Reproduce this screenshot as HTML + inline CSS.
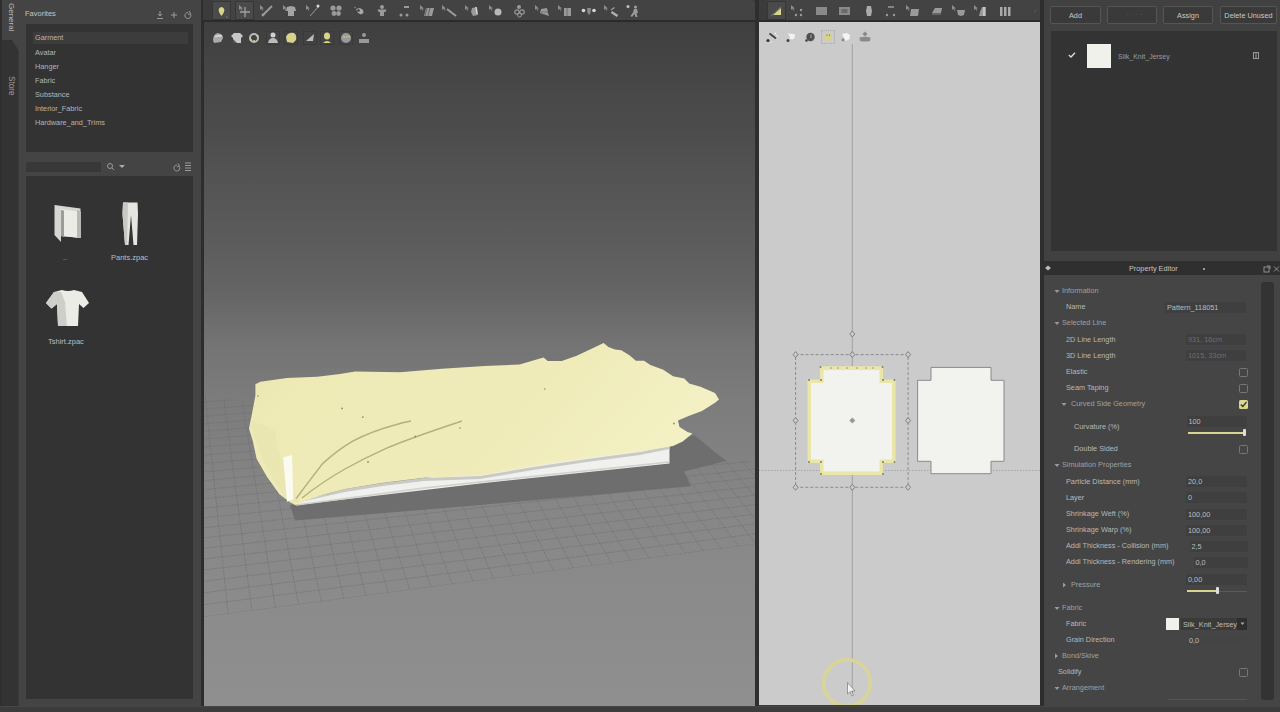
<!DOCTYPE html>
<html><head><meta charset="utf-8">
<style>
*{margin:0;padding:0;box-sizing:border-box}
html,body{width:1280px;height:712px;overflow:hidden;background:#3a3a3a;font-family:"Liberation Sans",sans-serif;color:#c8c8c8;font-size:7.3px;position:relative}
.a{position:absolute}
.t{position:absolute;white-space:nowrap;line-height:10px}
svg{overflow:visible}
</style></head><body>
<!-- left strip -->
<div class="a" style="left:0;top:0;width:18px;height:712px;background:#333"></div>
<div class="a" style="left:0;top:0;width:2px;height:712px;background:#2f2f2f"></div>
<svg class="a" style="left:0;top:0" width="27" height="60"><path d="M2 0H27V60H19V51L12 40H2Z" fill="#444"/></svg>
<div class="t" style="left:6px;top:3px;transform-origin:0 0;transform:translate(10px,0) rotate(90deg);font-size:8px;color:#b8b8b8">General</div>
<div class="t" style="left:6px;top:75.5px;transform-origin:0 0;transform:translate(10px,0) rotate(90deg);font-size:8.2px;color:#9a9a9a">Store</div>
<!-- left panel frame -->
<div class="a" style="left:19px;top:0;width:184px;height:706px;background:#444"></div>
<div class="t" style="left:25px;top:9px;font-size:7.5px;color:#c4c4c4">Favorites</div>
<svg class="a" style="left:154px;top:9px" width="40" height="12" fill="none" stroke="#9a9a9a" stroke-width="1">
 <path d="M3 9.5h6M6 2v5M4 5l2 2 2-2"/><path d="M17 6h6M20 3v6"/><path d="M34 3.5a3 3 0 1 0 2.5 1.5M35 2l1.5 2.5-2.5 1"/>
</svg>
<div class="a" style="left:26px;top:24px;width:167px;height:128px;background:#333"></div>
<div class="a" style="left:33px;top:32px;width:155px;height:12px;background:#3c3c3c"></div>
<div class="t" style="left:35px;top:33px;font-size:7.3px;color:#b5b5b5">Garment</div>
<div class="t" style="left:35px;top:47.5px;font-size:7.3px;color:#b5b5b5">Avatar</div>
<div class="t" style="left:35px;top:61.7px;font-size:7.3px;color:#b5b5b5">Hanger</div>
<div class="t" style="left:35px;top:75.8px;font-size:7.3px;color:#b5b5b5">Fabric</div>
<div class="t" style="left:35px;top:90px;font-size:7.3px;color:#b5b5b5">Substance</div>
<div class="t" style="left:35px;top:104px;font-size:7.3px;color:#b5b5b5">Interior_Fabric</div>
<div class="t" style="left:35px;top:118.3px;font-size:7.3px;color:#b5b5b5">Hardware_and_Trims</div>
<!-- search row -->
<div class="a" style="left:26px;top:162px;width:75px;height:10px;background:#383838"></div>
<svg class="a" style="left:104px;top:160px" width="90" height="14" fill="none" stroke="#9a9a9a" stroke-width="1">
 <circle cx="6" cy="6" r="2.5"/><path d="M8 8l2 2"/><path d="M15 5h6l-3 3z" fill="#aaa" stroke="none"/>
 <path d="M73 5a3 3 0 1 0 2.5 1.5M74 3.5l1.5 2.5-2.5 1"/><path d="M81 3h6M81 5.5h6M81 8h6M81 10.5h6"/>
</svg>
<div class="a" style="left:26px;top:176px;width:167px;height:523px;background:#333"></div>
<!-- folder icon -->
<svg class="a" style="left:50px;top:200px" width="36" height="46">
 <path d="M4.5 5 L30.5 8.5 L30.5 38 L22 37 L11 36 L11 42 L4.5 35 Z" fill="#d6d6d2"/>
 <path d="M11 9 L30.5 12 L30.5 38 L11 36 Z" fill="#ecece6"/>
 <path d="M11 10 L14 10.5 L14 37 L11 36Z" fill="#9c9c98"/>
 <path d="M27 10 L30.5 11 L30.5 38 L27 37.5Z" fill="#b8b8b4"/>
</svg>
<div class="t" style="left:63px;top:253px;font-size:7.3px;color:#aaa">..</div>
<!-- pants -->
<svg class="a" style="left:120px;top:200px" width="22" height="48">
 <path d="M3 2.5 H17.5 L18 14 L17 45 H13.5 L11 15 L8.5 45 H5 L2.5 14 Z" fill="#e6e6e0"/>
 <path d="M3 2.5 H8 L7 45 H5 L2.5 14Z" fill="#c8c8c4"/>
</svg>
<div class="t" style="left:111px;top:253px;font-size:7.5px;color:#bdbdbd">Pants.zpac</div>
<!-- tshirt -->
<svg class="a" style="left:44px;top:287px" width="48" height="42">
 <path d="M18 3 Q24 5 30 3 L38 5 L45 16 L39.5 21 L35 17 L34 39 H14 L13 17 L7.5 21.5 L2 16 L10 5 Z" fill="#ecece6"/>
 <path d="M13 17 L14 39 H23 L21 15 L17 5 L10 5 L2 16 L7.5 21.5Z" fill="#cfcfca"/>
</svg>
<div class="t" style="left:48px;top:337px;font-size:7.5px;color:#bdbdbd">Tshirt.zpac</div>
<!-- 3D toolbar -->
<div class="a" style="left:201px;top:0;width:2px;height:706px;background:#2e2e2e"></div>
<div class="a" style="left:203px;top:0;width:9px;height:20px;background:#3b3b3b"></div>
<div class="a" style="left:212px;top:0;width:543px;height:20px;background:#434343;border-top-right-radius:4px"></div>
<div class="a" style="left:203px;top:20px;width:553px;height:2px;background:#2b2b2b"></div>
<div class="a" style="left:203px;top:22px;width:1px;height:684px;background:#2b2b2b"></div>
<!-- 3D viewport -->
<div class="a" style="left:204px;top:22px;width:551px;height:684px;background:linear-gradient(#3f3f3f 0.0%,#494949 11.4%,#4b4b4b 15.1%,#535353 22.4%,#5b5b5b 31.1%,#646464 39.2%,#6d6d6d 43.6%,#747474 47.2%,#7c7c7c 55.3%,#868686 69.9%,#8c8c8c 87.4%,#8f8f8f 100.0%)"></div>
<!-- separator -->
<div class="a" style="left:755px;top:0;width:4px;height:712px;background:#2e2e2e"></div>
<!-- 2D toolbar -->
<div class="a" style="left:759px;top:0;width:281px;height:20px;background:#434343"></div>
<div class="a" style="left:759px;top:0;width:8px;height:20px;background:#3b3b3b"></div>
<div class="a" style="left:759px;top:20px;width:281px;height:2px;background:#2b2b2b"></div>
<div class="a" style="left:759px;top:22px;width:281px;height:683px;background:#cbcbcb"></div>
<div class="a" style="left:1040px;top:0;width:4px;height:712px;background:#2e2e2e"></div>
<!-- bottom bar -->
<div class="a" style="left:0;top:706px;width:1280px;height:6px;background:#3c3c3c"></div>
<div class="a" style="left:0;top:706px;width:1280px;height:1px;background:#464646"></div>
<div class="a" style="left:212px;top:1px;width:19px;height:19px;background:#4a4a4a;border:1px solid #363636"></div>
<svg class="a" style="left:212px;top:1px;filter:blur(.35px)" width="19" height="19" ><path d="M9.5 6 Q12.5 6.5 12.3 9.5 Q12 12.5 9.5 15 Q7 12.5 6.7 9.5 Q6.5 6.5 9.5 6Z" fill="#d8d58a"/><path d="M14 15l2 2" stroke="#777" stroke-width=".8"/></svg>
<div class="a" style="left:235px;top:1px;width:19px;height:19px;background:#4a4a4a;border:1px solid #363636"></div>
<svg class="a" style="left:235px;top:1px;filter:blur(.35px)" width="19" height="19" ><path d="M4 4l0 5 1.3-1.2 1.2 2 .8-.4-1.1-2h1.8z" fill="#8e8e8e"/><path d="M10 6v10M5 11h10" stroke="#a0a0a0" stroke-width="1.3"/></svg>
<svg class="a" style="left:267px;top:11px;filter:blur(.35px)" width="1" height="1" ><path d="M-7 -6l0 5 1.3-1.2 1.2 2 .8-.4-1.1-2h1.8z" fill="#8e8e8e"/><path d="M-4 4 L5 -5" stroke="#9a9a9a" stroke-width="2"/><circle cx="-4" cy="4" r="1.4" fill="#9a9a9a"/></svg>
<svg class="a" style="left:290px;top:11px;filter:blur(.35px)" width="1" height="1" ><path d="M-7 -6l0 5 1.3-1.2 1.2 2 .8-.4-1.1-2h1.8z" fill="#8e8e8e"/><path d="M-3 -4 L1 -5 L5 -4 L6 0 L4 0 L4 5 L-2 5 L-2 0 L-4 0Z" fill="#a4a4a4"/></svg>
<svg class="a" style="left:313px;top:11px;filter:blur(.35px)" width="1" height="1" ><path d="M-7 -6l0 5 1.3-1.2 1.2 2 .8-.4-1.1-2h1.8z" fill="#8e8e8e"/><path d="M-3 5 L5 -4" stroke="#9a9a9a" stroke-width="1"/><circle cx="5" cy="-5" r="1.5" fill="#ddd"/></svg>
<svg class="a" style="left:336px;top:11px;filter:blur(.35px)" width="1" height="1" ><circle cx="-3" cy="-3" r="2.6" fill="#9a9a9a"/><circle cx="3" cy="-3" r="2.6" fill="#9a9a9a"/><circle cx="-2" cy="2.5" r="2.4" fill="#9a9a9a"/><circle cx="2.5" cy="2.5" r="2.4" fill="#9a9a9a"/></svg>
<svg class="a" style="left:359px;top:11px;filter:blur(.35px)" width="1" height="1" ><path d="M-3 -2 L1 -3 L4 -1 L4.5 2 L2 3.5 L-1 2Z" fill="#a8a8a8"/><circle cx="-0.5" cy="-0.5" r="1.3" fill="#3a3a3a"/><circle cx="-4" cy="-3.5" r=".8" fill="#888"/></svg>
<svg class="a" style="left:382px;top:11px;filter:blur(.35px)" width="1" height="1" ><circle cx="0" cy="-4" r="2" fill="#9a9a9a"/><path d="M-4.5 -1.5 L4.5 -1.5 L3.5 1 L2 1 L2 5 L-2 5 L-2 1 L-3.5 1Z" fill="#9a9a9a"/></svg>
<svg class="a" style="left:405px;top:11px;filter:blur(.35px)" width="1" height="1" ><circle cx="-4" cy="4" r="1.5" fill="#9a9a9a"/><circle cx="2" cy="4" r="1.5" fill="#9a9a9a"/><path d="M-1 -4h5" stroke="#9a9a9a" stroke-width="2"/></svg>
<svg class="a" style="left:428px;top:11px;filter:blur(.35px)" width="1" height="1" ><path d="M-8 -6l0 5 1.3-1.2 1.2 2 .8-.4-1.1-2h1.8z" fill="#8e8e8e"/><path d="M-4 5 L-2 -3 L6 -3 L4 5Z" fill="#9a9a9a"/><path d="M-1 -3 L-3 5M2 -3 L0 5" stroke="#555" stroke-width=".8"/></svg>
<svg class="a" style="left:450px;top:11px;filter:blur(.35px)" width="1" height="1" ><path d="M-8 -6l0 5 1.3-1.2 1.2 2 .8-.4-1.1-2h1.8z" fill="#8e8e8e"/><path d="M-3 -2 L6 5" stroke="#9a9a9a" stroke-width="2.2"/></svg>
<svg class="a" style="left:473px;top:11px;filter:blur(.35px)" width="1" height="1" ><path d="M-8 -6l0 5 1.3-1.2 1.2 2 .8-.4-1.1-2h1.8z" fill="#8e8e8e"/><path d="M-1 -3 L4 -4 L5 4 L0 5 L-2 1Z" fill="#9a9a9a"/><path d="M3 -4 L4 3" stroke="#ddd" stroke-width="1.2"/></svg>
<svg class="a" style="left:497px;top:11px;filter:blur(.35px)" width="1" height="1" ><path d="M-8 -6l0 5 1.3-1.2 1.2 2 .8-.4-1.1-2h1.8z" fill="#8e8e8e"/><circle cx="1" cy="1" r="3.5" fill="#b8b8b8"/></svg>
<svg class="a" style="left:520px;top:11px;filter:blur(.35px)" width="1" height="1" ><circle cx="-1" cy="-4" r="2" fill="#9a9a9a"/><circle cx="-3" cy="1" r="2.2" fill="none" stroke="#9a9a9a" stroke-width="1.2"/><circle cx="2" cy="1" r="2.2" fill="none" stroke="#9a9a9a" stroke-width="1.2"/><circle cx="-0.5" cy="4" r="2" fill="none" stroke="#9a9a9a" stroke-width="1"/></svg>
<svg class="a" style="left:543px;top:11px;filter:blur(.35px)" width="1" height="1" ><path d="M-8 -6l0 5 1.3-1.2 1.2 2 .8-.4-1.1-2h1.8z" fill="#8e8e8e"/><path d="M-2 -2 L4 -3 L5 2 L6 5 L0 3 L-3 2Z" fill="#9a9a9a"/><path d="M-2 1h7" stroke="#666" stroke-width=".7"/></svg>
<svg class="a" style="left:566px;top:11px;filter:blur(.35px)" width="1" height="1" ><path d="M-8 -6l0 5 1.3-1.2 1.2 2 .8-.4-1.1-2h1.8z" fill="#8e8e8e"/><path d="M-2 -3 L5 -3 L5 5 L-2 5Z" fill="#9a9a9a"/><path d="M1 -3 V5" stroke="#666" stroke-width=".8"/></svg>
<svg class="a" style="left:589px;top:11px;filter:blur(.35px)" width="1" height="1" ><circle cx="-5.5" cy="-0.5" r="1.8" fill="#d8d8d8"/><circle cx="5" cy="-0.5" r="1.8" fill="#d8d8d8"/><path d="M-2 -3 L2 -3 L1.5 2 L0 4 L-1.5 2Z" fill="#8a8a8a"/></svg>
<svg class="a" style="left:612px;top:11px;filter:blur(.35px)" width="1" height="1" ><path d="M-8 -6l0 5 1.3-1.2 1.2 2 .8-.4-1.1-2h1.8z" fill="#8e8e8e"/><path d="M-1 -1 L2.5 -3.5" stroke="#9a9a9a" stroke-width="1.5"/><path d="M-0.5 1 L5.5 5" stroke="#b0b0b0" stroke-width="2.4"/></svg>
<svg class="a" style="left:634px;top:11px;filter:blur(.35px)" width="1" height="1" ><circle cx="-6" cy="-4.5" r="1.5" fill="#c0c0c0"/><circle cx="1.5" cy="-4" r="1.6" fill="#9a9a9a"/><path d="M0 -2 L3 -2 L4 2 L2.5 2 L3.5 6 L1.5 6 L0.5 3 L-2 6 L-3.5 5 L-1 1.5Z" fill="#9a9a9a"/></svg>
<div class="a" style="left:266px;top:31px;width:14px;height:14px;border:1px solid #3a3a3a;background:#424242"></div>
<div class="a" style="left:284px;top:31px;width:14px;height:14px;border:1px solid #3a3a3a;background:#424242"></div>
<div class="a" style="left:303px;top:31px;width:14px;height:14px;border:1px solid #3a3a3a;background:#424242"></div>
<div class="a" style="left:320px;top:31px;width:14px;height:14px;border:1px solid #3a3a3a;background:#424242"></div>
<div class="a" style="left:339px;top:31px;width:14px;height:14px;border:1px solid #3a3a3a;background:#424242"></div>
<svg class="a" style="left:218px;top:38px;filter:blur(.35px)" width="1" height="1" ><path d="M-5 2 Q-5 -4 0 -5 Q5 -4 5 0 L3 4 L-4 5Z" fill="#aaa"/><path d="M-3 -1 Q0 -3 4 -2" stroke="#ddd" stroke-width="1.5" fill="none"/></svg>
<svg class="a" style="left:237px;top:38px;filter:blur(.35px)" width="1" height="1" ><path d="M-3 -5 L3 -5 L6 -2 L4 0 L4 5 L-4 5 L-4 0 L-6 -2Z" fill="#c8c8c8"/><path d="M-4 1 L0 5 L-4 5Z" fill="#555"/></svg>
<svg class="a" style="left:254px;top:38px;filter:blur(.35px)" width="1" height="1" ><circle cx="0" cy="0" r="4" fill="none" stroke="#bbb" stroke-width="2"/><circle cx="-3" cy="2" r="1.1" fill="#d8d58a"/><circle cx="3.5" cy="-2" r="1.1" fill="#d8d58a"/><path d="M-1 2 L1 2 L0 4Z" fill="#d8d58a"/></svg>
<svg class="a" style="left:273px;top:38px;filter:blur(.35px)" width="1" height="1" ><circle cx="0" cy="-3" r="2.5" fill="#d0d0d0"/><path d="M-5 5 Q-4 0 0 0 Q4 0 5 5Z" fill="#bbb"/></svg>
<svg class="a" style="left:291px;top:38px;filter:blur(.35px)" width="1" height="1" ><path d="M-5 -1 Q-3 -6 3 -5 Q6 -3 5 2 L2 5 L-4 4Z" fill="#d8d58a"/></svg>
<svg class="a" style="left:310px;top:38px;filter:blur(.35px)" width="1" height="1" ><path d="M-4 3 L4 -4 L3 3Z" fill="#bbb"/></svg>
<svg class="a" style="left:327px;top:38px;filter:blur(.35px)" width="1" height="1" ><ellipse cx="0" cy="-2" rx="3" ry="3.5" fill="#d8d58a"/><path d="M-4 5 Q0 1 4 5" fill="#d8d58a"/></svg>
<svg class="a" style="left:346px;top:38px;filter:blur(.35px)" width="1" height="1" ><circle cx="0" cy="0" r="5" fill="#999"/><circle cx="-2" cy="-1" r=".8" fill="#d8d58a"/><circle cx="0.5" cy="-1" r=".8" fill="#d8d58a"/><circle cx="3" cy="-1.5" r=".8" fill="#d8d58a"/></svg>
<svg class="a" style="left:364px;top:38px;filter:blur(.35px)" width="1" height="1" ><circle cx="0" cy="-3" r="2" fill="#999"/><path d="M-5 1h10v4h-10z" fill="#999"/></svg>
<div class="a" style="left:767px;top:1px;width:19px;height:19px;background:#4a4a4a;border:1px solid #363636"></div>
<svg class="a" style="left:767px;top:1px;filter:blur(.35px)" width="19" height="19" ><path d="M6 14 L14 7 L14 14Z" fill="#d8d58a"/><path d="M4 15 L14 6" stroke="#888" stroke-width=".8"/></svg>
<svg class="a" style="left:798px;top:11px;filter:blur(.35px)" width="1" height="1" ><path d="M-7 -6l0 5 1.3-1.2 1.2 2 .8-.4-1.1-2h1.8z" fill="#8e8e8e"/><circle cx="-2" cy="4" r="1.2" fill="#9a9a9a"/><circle cx="3" cy="4" r="1.2" fill="#9a9a9a"/><circle cx="3" cy="-1" r="1.2" fill="#9a9a9a"/></svg>
<svg class="a" style="left:822px;top:11px;filter:blur(.35px)" width="1" height="1" ><rect x="-6" y="-4" width="11" height="8" fill="#8a8a8a"/></svg>
<svg class="a" style="left:845px;top:11px;filter:blur(.35px)" width="1" height="1" ><rect x="-6" y="-4" width="11" height="8" fill="#8a8a8a"/><rect x="-3.5" y="-2" width="6" height="4" fill="#6a6a6a"/></svg>
<svg class="a" style="left:869px;top:11px;filter:blur(.35px)" width="1" height="1" ><path d="M-2 -5 L2 -5 L3 0 L2 5 L-2 5 L-3 0Z" fill="#aaa"/></svg>
<svg class="a" style="left:891px;top:11px;filter:blur(.35px)" width="1" height="1" ><path d="M-3 -4h6" stroke="#9a9a9a" stroke-width="1.5"/><circle cx="-4" cy="4" r="1.2" fill="#9a9a9a"/><circle cx="3" cy="4" r="1.2" fill="#9a9a9a"/></svg>
<svg class="a" style="left:914px;top:11px;filter:blur(.35px)" width="1" height="1" ><path d="M-8 -6l0 5 1.3-1.2 1.2 2 .8-.4-1.1-2h1.8z" fill="#8e8e8e"/><path d="M-3 -2 L5 -2 L4 5 L-4 5Z" fill="#9a9a9a"/></svg>
<svg class="a" style="left:937px;top:11px;filter:blur(.35px)" width="1" height="1" ><path d="M-5 2 L-2 -3 L5 -3 L4 2Z" fill="#9a9a9a"/><path d="M-5 3h9" stroke="#888"/></svg>
<svg class="a" style="left:960px;top:11px;filter:blur(.35px)" width="1" height="1" ><path d="M-8 -6l0 5 1.3-1.2 1.2 2 .8-.4-1.1-2h1.8z" fill="#8e8e8e"/><path d="M-3 -1 L5 -1 L4 4 L1 5 L-2 4Z" fill="#9a9a9a"/></svg>
<svg class="a" style="left:982px;top:11px;filter:blur(.35px)" width="1" height="1" ><path d="M-8 -6l0 5 1.3-1.2 1.2 2 .8-.4-1.1-2h1.8z" fill="#8e8e8e"/><path d="M0 -4 L4 -4 L4 5 L-3 5 L-2 1Z" fill="#9a9a9a"/><path d="M2 -4 V5" stroke="#eee"/></svg>
<svg class="a" style="left:1005px;top:11px;filter:blur(.35px)" width="1" height="1" ><rect x="-5" y="-4" width="2.5" height="9" fill="#aaa"/><rect x="-1" y="-4" width="2.5" height="9" fill="#aaa"/><rect x="3" y="-4" width="2.5" height="9" fill="#aaa"/></svg>
<svg class="a" style="left:1035px;top:11px;filter:blur(.35px)" width="1" height="1" ><path d="M-1 2 L2 -2" stroke="#555" stroke-width="1"/></svg>
<svg class="a" style="left:772px;top:37px;filter:blur(.35px)" width="1" height="1" ><path d="M-2.5 -3.5 L4 1.5" stroke="#444" stroke-width="2"/><circle cx="-4" cy="3.5" r="1.6" fill="#333"/><circle cx="3.5" cy="-3.5" r=".7" fill="#fff"/><circle cx="5" cy="-1" r=".7" fill="#fff"/><circle cx="-1" cy="5" r=".6" fill="#fff"/></svg>
<svg class="a" style="left:791px;top:37px;filter:blur(.35px)" width="1" height="1" ><path d="M-3 -3.5 L3.5 -3 L4 0 L2 2.5 L-1 2 L-1.5 -1Z" fill="#f2f2f2"/><circle cx="-3" cy="3.5" r="1.5" fill="#444"/></svg>
<svg class="a" style="left:810px;top:37px;filter:blur(.35px)" width="1" height="1" ><circle cx="0.5" cy="0" r="4.2" fill="#505050"/><path d="M1 -2.5v3.5" stroke="#aaa" stroke-width="1"/><circle cx="-3.5" cy="3.5" r="1.3" fill="#444"/></svg>
<svg class="a" style="left:828px;top:37px;filter:blur(.35px)" width="1" height="1" ><rect x="-6.5" y="-6.5" width="13" height="13" fill="none" stroke="#999" stroke-width=".8" stroke-dasharray="1 1.2"/><path d="M-4 -1 Q-3 -4.5 1 -4.5 Q4.5 -3.5 4 0.5 Q3.5 4 -0.5 4 Q-4 3 -4 -1Z" fill="#d6d38c"/><circle cx="-1" cy="-2" r=".6" fill="#444"/><circle cx="1.5" cy="-2" r=".6" fill="#444"/></svg>
<svg class="a" style="left:846px;top:37px;filter:blur(.35px)" width="1" height="1" ><path d="M-4 -3 L1 -4 L4 -2 L3.5 2 L0 4 L-2 1Z" fill="#f4f4f4"/><circle cx="-3" cy="3" r="1.4" fill="#888"/></svg>
<svg class="a" style="left:865px;top:37px;filter:blur(.35px)" width="1" height="1" ><path d="M0 -5.5 L2.5 -3 L0 -0.5 L-2.5 -3Z" fill="#8a8a8a"/><path d="M-5.5 0.5 Q0 -1 5.5 0.5 L5 4 Q0 5 -5 4Z" fill="#8a8a8a"/></svg><svg class="a" style="left:0;top:0" width="1280" height="712">
<defs><clipPath id="vp"><rect x="204" y="22" width="551" height="684"/></clipPath>
<linearGradient id="cl" x1="0" y1="0" x2="1" y2="0.3"><stop offset="0" stop-color="#e8e4ac"/><stop offset="0.15" stop-color="#eeeab6"/><stop offset="0.7" stop-color="#f0ecba"/><stop offset="1" stop-color="#f3f0c4"/></linearGradient></defs>
<g clip-path="url(#vp)">
<clipPath id="gc"><polygon points="204,396 756,462 756,544 204,617"/></clipPath><path clip-path="url(#gc)" d="M129.6 626.8L839.6 532.9M129.7 614.3L831.6 524.0M129.8 602.1L823.8 515.2M129.8 590.3L816.1 506.6M129.9 578.7L808.6 498.2M130.0 567.5L801.3 489.9M130.1 556.6L794.2 481.9M130.2 545.9L787.1 474.0M130.3 535.6L780.3 466.3M130.3 525.5L773.6 458.7M130.4 515.6L767.0 451.3M130.5 506.0L760.6 444.1M130.6 496.7L754.2 437.0M130.6 487.5L748.1 430.0M130.7 478.6L742.0 423.2M130.8 469.9L736.1 416.5M130.8 461.4L730.2 410.0M130.9 453.1L724.5 403.6M130.9 445.0L718.9 397.3M131.0 437.0L713.4 391.1M131.1 429.3L708.0 385.0M131.1 421.7L702.7 379.0M131.2 414.3L697.5 373.2M131.2 407.0L692.4 367.5M131.3 399.9L687.4 361.8M131.3 393.0L682.5 356.3M129.6 626.8L131.4 386.1M154.7 623.5L149.7 385.0M179.5 620.2L167.9 383.8M204.0 617.0L185.9 382.6M228.1 613.8L203.6 381.5M251.9 610.6L221.3 380.3M275.4 607.5L238.7 379.2M298.5 604.5L255.9 378.1M321.4 601.5L273.0 377.0M343.9 598.5L289.9 375.9M366.1 595.5L306.7 374.8M388.1 592.6L323.3 373.7M409.7 589.8L339.7 372.7M431.1 587.0L355.9 371.6M452.2 584.2L372.1 370.6M473.0 581.4L388.0 369.6M493.6 578.7L403.8 368.5M513.8 576.0L419.4 367.5M533.9 573.4L434.9 366.5M553.7 570.8L450.3 365.5M573.2 568.2L465.5 364.6M592.5 565.6L480.6 363.6M611.6 563.1L495.5 362.6M630.4 560.6L510.3 361.7M649.0 558.1L524.9 360.7M667.4 555.7L539.5 359.8M685.5 553.3L553.8 358.8M703.5 550.9L568.1 357.9M721.2 548.6L582.2 357.0M738.7 546.3L596.2 356.1M756.0 544.0L610.1 355.2M773.1 541.7L623.8 354.3M790.0 539.5L637.5 353.4M806.7 537.3L651.0 352.6M823.2 535.1L664.3 351.7M839.6 532.9L677.6 350.8" stroke="#6c6c6c" stroke-width="1" fill="none" opacity="0.6" stroke-dasharray="1.5 1"/>
<polygon points="669.5,443.0 694.0,435.0 726.0,461.0 684.0,471.5 691.0,486.2 587.0,495.5 480.0,505.0 295.0,520.6 290.0,505.0" fill="#6e6e6e"/>
<polygon points="292.0,500.0 669.5,438.0 691.0,434.0 669.5,446.0 669.5,463.5 480.0,483.5 297.0,505.0" fill="#f0f0ee"/>
<path d="M296 505 L424 488 L669 462" stroke="#d0d0cc" stroke-width="1.5" fill="none"/>
<path d="M296 503 L345 492 L383 486 L424 481 L480 479 L533 470 L587 462 L640 455 L669.5 449 L669.5 446 L640 452 L587 459 L533 467 L480 476 L424 478 L383 483 L345 489 L296 502Z" fill="#c9c9c6"/>
<polygon points="255.4,384.2 260.4,381.7 287.0,377.9 317.3,376.7 340.0,374.1 355.2,371.6 400.0,372.3 442.2,368.8 484.4,366.0 519.5,364.6 543.5,357.6 547.7,361.1 561.7,361.1 576.1,356.0 590.0,349.5 603.6,343.1 608.4,347.1 614.9,349.5 621.3,350.3 629.4,355.2 635.9,360.8 644.0,360.8 650.4,364.9 663.3,369.7 673.0,376.2 684.3,378.6 689.2,383.4 700.5,386.7 715.0,393.1 719.0,399.6 715.0,402.8 702.0,410.9 689.2,415.7 677.9,420.6 679.5,427.0 687.5,431.9 692.4,433.5 682.7,441.6 673.0,446.0 640.2,451.5 586.8,458.1 533.4,466.1 480.0,475.5 424.0,477.8 383.0,482.8 345.0,489.0 319.8,495.5 295.8,504.3 295.8,505.6 289.5,501.8 279.4,494.2 266.8,476.5 256.6,458.8 252.8,441.1 249.0,428.5 251.6,415.8 255.4,395.6" fill="url(#cl)"/>
<path d="M295.8 499 Q310 480 322.4 463.9 Q336 451 352.7 441.1 Q372 431 395.7 424.7 Q404 422 411 421" stroke="#b3b07e" stroke-width="1.5" fill="none"/>
<path d="M302 498 Q322 482 345 469 Q365 458 385.6 448.7 Q405 440 462 421" stroke="#b3b07e" stroke-width="1.4" fill="none"/>
<path d="M250 420 Q262 470 290 503 L300 503 Q280 470 275 430Z" fill="#e2dfa8" opacity="0.35"/>
<g fill="#8f8d68"><circle cx="342" cy="408.4" r=".9"/><circle cx="362.8" cy="417.1" r=".9"/><circle cx="415.3" cy="436.4" r=".9"/><circle cx="368" cy="462" r=".9"/><circle cx="544.7" cy="389" r=".8"/><circle cx="674" cy="423.5" r=".9"/><circle cx="258" cy="396" r=".8"/><circle cx="460" cy="428" r=".8"/></g>
<path d="M283.2 457.5 L292 455 L293.3 499.3 L287 501.8Z" fill="#fbfbf2"/>
</g></svg><svg class="a" style="left:0;top:0" width="1280" height="712">
<defs><clipPath id="v2"><rect x="759" y="22" width="281" height="683"/></clipPath></defs>
<g clip-path="url(#v2)">
<path d="M852.3 44V695" stroke="#a2a2a2" stroke-width="1"/>
<path d="M759 470.5H1040" stroke="#a4a4a4" stroke-width="1" stroke-dasharray="1.5 1.5"/>
<rect x="795.6" y="354.6" width="112.5" height="132.7" fill="none" stroke="#8c8c8c" stroke-width="1" stroke-dasharray="3 2"/>
<path d="M807.5 379.5 H820 V366.3 H883 V379.5 H895.6 V463 H883 V475 H820 V463 H807.5Z" fill="#e9e6a8"/>
<path d="M811 383 H823.5 V370 H879.5 V383 H892 V459.5 H879.5 V471.5 H823.5 V459.5 H811Z" fill="#f2f2ee"/>
<g fill="#7d7d7d"><circle cx="820.5" cy="367" r="1"/><circle cx="882.5" cy="367" r="1"/><circle cx="809" cy="380" r="1"/><circle cx="821" cy="380" r="1"/><circle cx="883" cy="380" r="1"/><circle cx="894.5" cy="380" r="1"/>
<circle cx="809" cy="462" r="1"/><circle cx="821" cy="462" r="1"/><circle cx="883" cy="462" r="1"/><circle cx="894.5" cy="462" r="1"/><circle cx="821" cy="474" r="1"/><circle cx="883" cy="474" r="1"/>
<circle cx="831" cy="368" r=".7"/><circle cx="838" cy="368" r=".7"/><circle cx="847" cy="368" r=".7"/><circle cx="857" cy="368" r=".7"/><circle cx="866" cy="368" r=".7"/><circle cx="873" cy="368" r=".7"/></g>
<path d="M917.6 380.3 H931 V367.4 H991 V380.3 H1004 V461.3 H991 V473.7 H931 V461.3 H917.6Z" fill="#f2f2ee" stroke="#8a8a8a" stroke-width="1"/>
<g fill="#cbcbcb" stroke="#7a7a7a" stroke-width="0.9">
<path d="M795.6 351.6l2.5 3-2.5 3-2.5-3z"/><path d="M852.3 351.6l2.5 3-2.5 3-2.5-3z"/><path d="M908.1 351.6l2.5 3-2.5 3-2.5-3z"/>
<path d="M795.6 417.5l2.5 3-2.5 3-2.5-3z"/><path d="M908.1 417.5l2.5 3-2.5 3-2.5-3z"/>
<path d="M795.6 484.3l2.5 3-2.5 3-2.5-3z"/><path d="M852.3 484.3l2.5 3-2.5 3-2.5-3z"/><path d="M908.1 484.3l2.5 3-2.5 3-2.5-3z"/>
<path d="M852.3 331l2.5 3-2.5 3-2.5-3z"/>
</g>
<path d="M852.3 417.5l3 3-3 3-3-3z" fill="#999"/>
<circle cx="847" cy="683" r="23.3" fill="none" stroke="#d9d596" stroke-width="3.6"/>
<path d="M847.5 682.5 L847.5 694 L850 691.5 L852 696 L853.5 695.3 L851.5 691 L855 691Z" fill="#f4f4f4" stroke="#777" stroke-width=".7"/>
</g></svg><div class="a" style="left:1044px;top:0;width:236px;height:261px;background:#414141"></div>
<div class="a" style="left:1050px;top:6px;width:51px;height:18px;background:#3a3a3a;border:1px solid #555;border-radius:2px"></div>
<div class="t" style="left:1050px;top:11px;width:51px;text-align:center;font-size:7.3px;color:#c8c8c8">Add</div>
<div class="a" style="left:1107px;top:6px;width:50px;height:18px;background:#3a3a3a;border:1px solid #555;border-radius:2px"></div>
<div class="a" style="left:1163px;top:6px;width:50px;height:18px;background:#3a3a3a;border:1px solid #555;border-radius:2px"></div>
<div class="t" style="left:1163px;top:11px;width:50px;text-align:center;font-size:7.3px;color:#c8c8c8">Assign</div>
<div class="a" style="left:1220px;top:6px;width:57px;height:18px;background:#3a3a3a;border:1px solid #555;border-radius:2px"></div>
<div class="t" style="left:1220px;top:11px;width:57px;text-align:center;font-size:7.3px;color:#c8c8c8">Delete Unused</div>
<div class="t" style="left:1126px;top:10px;font-size:7.3px;color:#5c5c5c">· · · ·</div>
<div class="a" style="left:1051px;top:31px;width:226px;height:220px;background:#333"></div>
<svg class="a" style="left:1068px;top:52px" width="8" height="6"><path d="M.8 3 L3 5 L7 .8" stroke="#ddd" stroke-width="1.3" fill="none"/></svg>
<div class="a" style="left:1087px;top:44px;width:24px;height:24px;background:#f1f1ec"></div>
<div class="t" style="left:1118px;top:52px;font-size:7px;color:#9c9c9c">Silk_Knit_Jersey</div>
<svg class="a" style="left:1253px;top:52px" width="7" height="7"><rect x="0.5" y="0.5" width="5" height="6" fill="none" stroke="#999" stroke-width="1"/><path d="M3 .5V6.5" stroke="#999"/></svg>
<div class="a" style="left:1044px;top:261px;width:236px;height:14px;background:#2f2f2f"></div>
<svg class="a" style="left:1044px;top:264px" width="8" height="8"><path d="M1 4 L4 1.5 L7 4 L4 6.5Z" fill="#bbb"/></svg>
<div class="t" style="left:1129px;top:264px;font-size:7.3px;color:#c4c4c4">Property Editor</div>
<div class="a" style="left:1203px;top:268px;width:2px;height:2px;background:#999"></div>
<svg class="a" style="left:1263px;top:265px" width="17" height="8" fill="none" stroke="#999" stroke-width=".9"><rect x="1" y="2" width="5" height="5"/><path d="M4 1h3v3"/><path d="M11 1.5l5 5M16 1.5l-5 5"/></svg>
<div class="a" style="left:1044px;top:275px;width:236px;height:431px;background:#454545"></div>
<div class="a" style="left:1261px;top:282px;width:13px;height:418px;background:#333;border-radius:3px"></div>
<svg class="a" style="left:1054px;top:289px" width="6" height="5"><path d="M.5 1 H5.5 L3 4Z" fill="#9a9a9a"/></svg>
<div class="t" style="left:1062px;top:286px;font-size:7.3px;color:#a0a0a0">Information</div>
<div class="t" style="left:1066px;top:302px;font-size:7.3px;color:#b8b8b8">Name</div>
<div class="a" style="left:1165px;top:301.5px;width:81px;height:11px;background:#3f3f3f"></div>
<div class="t" style="left:1167px;top:302.5px;font-size:7.3px;color:#bdbdbd">Pattern_118051</div>
<svg class="a" style="left:1054px;top:321px" width="6" height="5"><path d="M.5 1 H5.5 L3 4Z" fill="#9a9a9a"/></svg>
<div class="t" style="left:1062px;top:318px;font-size:7.3px;color:#a0a0a0">Selected Line</div>
<div class="t" style="left:1066px;top:334.5px;font-size:7.3px;color:#b8b8b8">2D Line Length</div>
<div class="a" style="left:1186px;top:334.0px;width:60px;height:11px;background:#3f3f3f"></div>
<div class="t" style="left:1188px;top:335.0px;font-size:7.3px;color:#6e6e6e">931, 16cm</div>
<div class="t" style="left:1066px;top:350.5px;font-size:7.3px;color:#b8b8b8">3D Line Length</div>
<div class="a" style="left:1186px;top:350.0px;width:60px;height:11px;background:#3f3f3f"></div>
<div class="t" style="left:1188px;top:351.0px;font-size:7.3px;color:#6e6e6e">1015, 33cm</div>
<div class="t" style="left:1066px;top:367px;font-size:7.3px;color:#b8b8b8">Elastic</div>
<div class="a" style="left:1239px;top:367.5px;width:9px;height:9px;border:1px solid #777;border-radius:1.5px"></div>
<div class="t" style="left:1066px;top:383px;font-size:7.3px;color:#b8b8b8">Seam Taping</div>
<div class="a" style="left:1239px;top:383.5px;width:9px;height:9px;border:1px solid #777;border-radius:1.5px"></div>
<svg class="a" style="left:1061px;top:402px" width="6" height="5"><path d="M.5 1 H5.5 L3 4Z" fill="#9a9a9a"/></svg>
<div class="t" style="left:1071px;top:399px;font-size:7.3px;color:#a0a0a0">Curved Side Geometry</div>
<svg class="a" style="left:1239px;top:399.5px" width="9" height="9"><rect x="0" y="0" width="9" height="9" rx="1.5" fill="#d9d690"/><path d="M1.8 4.5 L3.8 6.5 L7.5 2" stroke="#333" stroke-width="1.2" fill="none"/></svg>
<div class="a" style="left:1186.5px;top:415.5px;width:60px;height:11px;background:#3f3f3f"></div>
<div class="t" style="left:1188.5px;top:416.5px;font-size:7.3px;color:#bdbdbd">100</div>
<div class="t" style="left:1074px;top:421.5px;font-size:7.3px;color:#b8b8b8">Curvature (%)</div>
<div class="a" style="left:1188px;top:431.5px;width:57px;height:2px;background:#d8d590"></div>
<div class="a" style="left:1242.5px;top:429px;width:3px;height:7px;background:#ddd;border-radius:1px"></div>
<div class="t" style="left:1074px;top:444px;font-size:7.3px;color:#b8b8b8">Double Sided</div>
<div class="a" style="left:1239px;top:444.5px;width:9px;height:9px;border:1px solid #777;border-radius:1.5px"></div>
<svg class="a" style="left:1054px;top:463px" width="6" height="5"><path d="M.5 1 H5.5 L3 4Z" fill="#9a9a9a"/></svg>
<div class="t" style="left:1062px;top:460px;font-size:7.3px;color:#a0a0a0">Simulation Properties</div>
<div class="t" style="left:1066px;top:476.5px;font-size:7.3px;color:#b8b8b8">Particle Distance (mm)</div>
<div class="a" style="left:1186px;top:476.0px;width:61px;height:11px;background:#3f3f3f"></div>
<div class="t" style="left:1188px;top:477.0px;font-size:7.3px;color:#bdbdbd">20,0</div>
<div class="t" style="left:1066px;top:492.5px;font-size:7.3px;color:#b8b8b8">Layer</div>
<div class="a" style="left:1186px;top:492.0px;width:61px;height:11px;background:#3f3f3f"></div>
<div class="t" style="left:1188px;top:493.0px;font-size:7.3px;color:#bdbdbd">0</div>
<div class="t" style="left:1066px;top:509px;font-size:7.3px;color:#b8b8b8">Shrinkage Weft (%)</div>
<div class="a" style="left:1186px;top:508.5px;width:61px;height:11px;background:#3f3f3f"></div>
<div class="t" style="left:1188px;top:509.5px;font-size:7.3px;color:#bdbdbd">100,00</div>
<div class="t" style="left:1066px;top:525px;font-size:7.3px;color:#b8b8b8">Shrinkage Warp (%)</div>
<div class="a" style="left:1186px;top:524.5px;width:61px;height:11px;background:#3f3f3f"></div>
<div class="t" style="left:1188px;top:525.5px;font-size:7.3px;color:#bdbdbd">100,00</div>
<div class="t" style="left:1066px;top:541px;font-size:7.3px;color:#b8b8b8">Addl Thickness - Collision (mm)</div>
<div class="a" style="left:1189.5px;top:540.5px;width:58px;height:11px;background:#3f3f3f"></div>
<div class="t" style="left:1191.5px;top:541.5px;font-size:7.3px;color:#bdbdbd">2,5</div>
<div class="t" style="left:1066px;top:557px;font-size:7.3px;color:#b8b8b8">Addl Thickness - Rendering (mm)</div>
<div class="a" style="left:1193.5px;top:556.5px;width:54px;height:11px;background:#3f3f3f"></div>
<div class="t" style="left:1195.5px;top:557.5px;font-size:7.3px;color:#bdbdbd">0,0</div>
<div class="a" style="left:1186px;top:573.5px;width:61px;height:11px;background:#3f3f3f"></div>
<div class="t" style="left:1188px;top:574.5px;font-size:7.3px;color:#bdbdbd">0,00</div>
<svg class="a" style="left:1062px;top:581.5px" width="5" height="6"><path d="M1 .5 V5.5 L4 3Z" fill="#9a9a9a"/></svg>
<div class="t" style="left:1071px;top:579.5px;font-size:7.3px;color:#a0a0a0">Pressure</div>
<div class="a" style="left:1187px;top:590px;width:30px;height:2px;background:#d8d590"></div>
<div class="a" style="left:1217px;top:590.5px;width:30px;height:1px;background:#5a5a5a"></div>
<div class="a" style="left:1216px;top:587px;width:3px;height:7px;background:#ddd;border-radius:1px"></div>
<svg class="a" style="left:1054px;top:605.5px" width="6" height="5"><path d="M.5 1 H5.5 L3 4Z" fill="#9a9a9a"/></svg>
<div class="t" style="left:1062px;top:602.5px;font-size:7.3px;color:#a0a0a0">Fabric</div>
<div class="t" style="left:1066px;top:619px;font-size:7.3px;color:#b8b8b8">Fabric</div>
<div class="a" style="left:1166px;top:618px;width:12.5px;height:12px;background:#f1f1ec"></div>
<div class="a" style="left:1181px;top:618.0px;width:66px;height:12px;background:#3a3a3a"></div>
<div class="t" style="left:1183px;top:619.5px;font-size:7.3px;color:#bdbdbd">Silk_Knit_Jersey</div>
<div class="a" style="left:1237px;top:618px;width:10px;height:12px;background:#2e2e2e"></div>
<svg class="a" style="left:1240px;top:622px" width="5" height="4"><path d="M.5 .5H4.5L2.5 3Z" fill="#aaa"/></svg>
<div class="t" style="left:1066px;top:635px;font-size:7.3px;color:#b8b8b8">Grain Direction</div>
<div class="a" style="left:1187px;top:634.5px;width:60px;height:11px;background:#444"></div>
<div class="t" style="left:1189px;top:635.5px;font-size:7.3px;color:#bdbdbd">0,0</div>
<svg class="a" style="left:1054px;top:652.5px" width="5" height="6"><path d="M1 .5 V5.5 L4 3Z" fill="#9a9a9a"/></svg>
<div class="t" style="left:1062px;top:650.5px;font-size:7.3px;color:#a0a0a0">Bond/Skive</div>
<div class="t" style="left:1058px;top:667px;font-size:7.3px;color:#b8b8b8">Solidify</div>
<div class="a" style="left:1239px;top:667.5px;width:9px;height:9px;border:1px solid #777;border-radius:1.5px"></div>
<svg class="a" style="left:1054px;top:686px" width="6" height="5"><path d="M.5 1 H5.5 L3 4Z" fill="#9a9a9a"/></svg>
<div class="t" style="left:1062px;top:683px;font-size:7.3px;color:#a0a0a0">Arrangement</div>
<div class="a" style="left:1168px;top:698.5px;width:79px;height:1px;background:#555"></div></body></html>
